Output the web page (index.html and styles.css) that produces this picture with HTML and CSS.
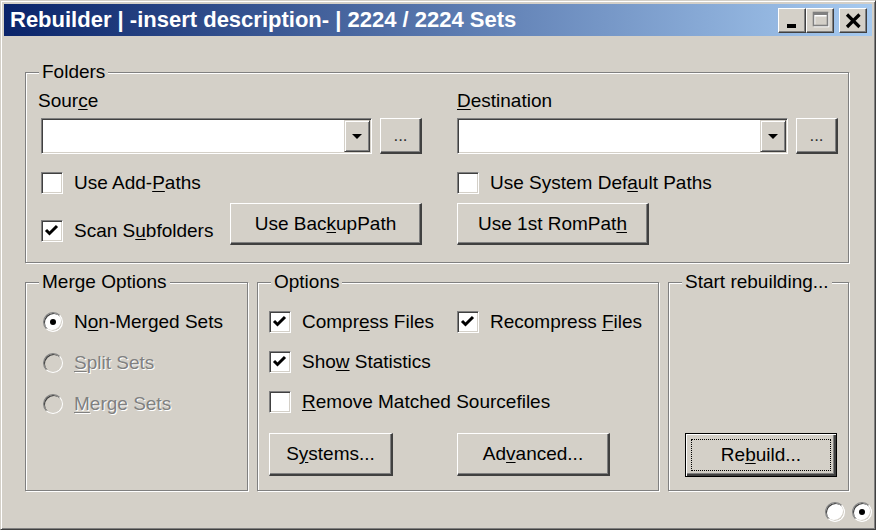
FILE: index.html
```html
<!DOCTYPE html>
<html lang="en">
<head>
    <meta charset="UTF-8">
    <meta name="viewport" content="width=device-width, initial-scale=1.0">
    <title>Rebuilder</title>
    <link rel="stylesheet" href="styles.css">
</head>
<body>
    <div class="window">
        <div class="titlebar">
            <span class="titlebar__text">Rebuilder | -insert description- | 2224 / 2224 Sets</span>
            <div class="titlebar__buttons">
                <button class="cap-btn" title="Minimize">
                    <svg width="26" height="23" viewBox="0 0 26 23"><rect x="8" y="15" width="9" height="4" fill="#000"/></svg>
                </button>
                <button class="cap-btn" title="Maximize">
                    <svg width="26" height="23" viewBox="0 0 26 23">
                        <rect x="7.5" y="4.5" width="14" height="13" fill="none" stroke="#fff" stroke-width="1.6"/>
                        <rect x="7.5" y="5" width="14" height="2.5" fill="#fff"/>
                        <rect x="6.5" y="3.5" width="14" height="13" fill="none" stroke="#808080" stroke-width="1.6"/>
                        <rect x="6.5" y="3.5" width="14" height="2.5" fill="#808080"/>
                    </svg>
                </button>
                <button class="cap-btn cap-btn--close" title="Close">
                    <svg width="26" height="23" viewBox="0 0 26 23"><path d="M7 5.5 L19.5 18 M19.5 5.5 L7 18" stroke="#000" stroke-width="3.2" fill="none"/></svg>
                </button>
            </div>
        </div>

        <div class="client">
            <div class="group group--folders">
                <span class="group__title">Folders</span>
                <div class="folders">
                    <div class="folders__col">
                        <div class="field-label field-label--source">Sour<u>c</u>e</div>
                        <div class="path-row">
                            <div class="combo">
                                <div class="combo__field"></div>
                                <div class="combo__btn"><span class="combo__arrow"></span></div>
                            </div>
                            <button class="btn btn--browse">...</button>
                        </div>
                        <label class="check check--first">
                            <span class="check__box"></span>
                            <span>Use Add-<u>P</u>aths</span>
                        </label>
                        <div class="folders__bottom">
                            <label class="check check--scan">
                                <span class="check__box"><svg width="20" height="20" viewBox="0 0 20 20"><path d="M4 9 L7.5 12.5 L15 5" stroke="#000" stroke-width="3" fill="none"/></svg></span>
                                <span>Scan S<u>u</u>bfolders</span>
                            </label>
                            <button class="btn btn--path btn--push-right">Use Bac<u>k</u>upPath</button>
                        </div>
                    </div>
                    <div class="folders__col">
                        <div class="field-label"><u>D</u>estination</div>
                        <div class="path-row">
                            <div class="combo">
                                <div class="combo__field"></div>
                                <div class="combo__btn"><span class="combo__arrow"></span></div>
                            </div>
                            <button class="btn btn--browse">...</button>
                        </div>
                        <label class="check check--first">
                            <span class="check__box"></span>
                            <span>Use System Def<u>a</u>ult Paths</span>
                        </label>
                        <div class="folders__bottom">
                            <button class="btn btn--path">Use 1st RomPat<u>h</u></button>
                        </div>
                    </div>
                </div>
            </div>

            <div class="groups-row">
                <div class="group group--merge">
                    <span class="group__title">Merge Options</span>
                    <div class="radio-list">
                        <label class="radio">
                            <span class="radio__dot radio__dot--on"></span>
                            <span>N<u>o</u>n-Merged Sets</span>
                        </label>
                        <label class="radio radio--disabled">
                            <span class="radio__dot"></span>
                            <span><u>S</u>plit Sets</span>
                        </label>
                        <label class="radio radio--disabled">
                            <span class="radio__dot"></span>
                            <span><u>M</u>erge Sets</span>
                        </label>
                    </div>
                </div>

                <div class="group group--options">
                    <span class="group__title">Options</span>
                    <div class="options-grid">
                        <label class="check">
                            <span class="check__box"><svg width="20" height="20" viewBox="0 0 20 20"><path d="M4 9 L7.5 12.5 L15 5" stroke="#000" stroke-width="3" fill="none"/></svg></span>
                            <span>Compr<u>e</u>ss Files</span>
                        </label>
                        <label class="check">
                            <span class="check__box"><svg width="20" height="20" viewBox="0 0 20 20"><path d="M4 9 L7.5 12.5 L15 5" stroke="#000" stroke-width="3" fill="none"/></svg></span>
                            <span>Recompress <u>F</u>iles</span>
                        </label>
                        <label class="check options-grid__wide">
                            <span class="check__box"><svg width="20" height="20" viewBox="0 0 20 20"><path d="M4 9 L7.5 12.5 L15 5" stroke="#000" stroke-width="3" fill="none"/></svg></span>
                            <span>Sho<u>w</u> Statistics</span>
                        </label>
                        <label class="check options-grid__wide">
                            <span class="check__box"></span>
                            <span><u>R</u>emove Matched Sourcefiles</span>
                        </label>
                    </div>
                    <div class="options-buttons">
                        <button class="btn btn--systems">S<u>y</u>stems...</button>
                        <button class="btn btn--advanced">Ad<u>v</u>anced...</button>
                    </div>
                </div>

                <div class="group group--start">
                    <span class="group__title">Start rebuilding...</span>
                    <button class="btn btn--default"><span class="btn__focus">Re<u>b</u>uild...</span></button>
                </div>
            </div>

            <div class="status">
                <span class="radio__dot"></span>
                <span class="radio__dot radio__dot--on"></span>
            </div>
        </div>
    </div>
</body>
</html>
```

FILE: styles.css
```css
* {
    box-sizing: border-box;
}
body {
    margin: 0;
    background: #d4d0c8;
    font-family: "Liberation Sans", Arial, sans-serif;
    font-size: 19px;
    color: #000;
}
u {
    text-underline-offset: 2px;
}

/* window frame */
.window {
    width: 876px;
    height: 530px;
    padding: 3px;
    background: #d4d0c8;
    border: 1px solid;
    border-color: #d4d0c8 #404040 #404040 #d4d0c8;
    box-shadow: inset 1px 1px #fff, inset -1px -1px #808080;
}
.titlebar {
    height: 32px;
    display: flex;
    align-items: center;
    padding: 0 5px 0 6px;
    background: linear-gradient(to right, #0a246a, #a6caf0);
}
.titlebar__text {
    flex: 1;
    color: #fff;
    font-weight: bold;
    font-size: 22px;
    line-height: 32px;
    white-space: nowrap;
}
.titlebar__buttons {
    display: flex;
}
.cap-btn {
    width: 28px;
    height: 25px;
    padding: 0;
    background: #d4d0c8;
    border: 1px solid;
    border-color: #fff #404040 #404040 #fff;
    box-shadow: inset -1px -1px #808080;
    display: flex;
    align-items: center;
    justify-content: center;
}
.cap-btn svg {
    display: block;
}
.cap-btn--close {
    margin-left: 5px;
}

/* client area */
.client {
    padding: 36px 23px 0 21px;
}
.group {
    position: relative;
    border: 1px solid #808080;
    box-shadow: inset 1px 1px #fff, 1px 1px #fff;
}
.group__title {
    position: absolute;
    top: -12px;
    left: 13px;
    padding: 0 3px;
    line-height: 22px;
    background: #d4d0c8;
    white-space: nowrap;
}

/* folders */
.group--folders {
    height: 191px;
    padding: 17px 10px 0 15px;
}
.folders {
    display: grid;
    grid-template-columns: 381px 381px;
    column-gap: 35px;
}
.folders__col {
    display: flex;
    flex-direction: column;
}
.field-label {
    height: 22px;
    line-height: 22px;
}
.field-label--source {
    margin-left: -3px;
}
.path-row {
    display: flex;
    gap: 8px;
    margin-top: 6px;
    height: 36px;
}
.combo {
    width: 331px;
    display: flex;
    padding: 1px;
    background: #fff;
    border: 1px solid;
    border-color: #808080 #fff #fff #808080;
    box-shadow: inset 1px 1px #404040, inset -1px -1px #d4d0c8;
}
.combo__field {
    flex: 1;
}
.combo__btn {
    width: 26px;
    display: flex;
    align-items: center;
    justify-content: center;
    background: #d4d0c8;
    border: 1px solid;
    border-color: #d4d0c8 #404040 #404040 #d4d0c8;
    box-shadow: inset 1px 1px #fff, inset -1px -1px #808080;
}
.combo__arrow {
    width: 0;
    height: 0;
    border-left: 5px solid transparent;
    border-right: 5px solid transparent;
    border-top: 5px solid #000;
}
.check--first {
    margin-top: 18px;
}
.folders__bottom {
    display: flex;
    align-items: flex-end;
    margin-top: 9px;
    height: 42px;
}
.check--scan {
    margin-bottom: 3px;
}

/* checkbox and radio */
.check,
.radio {
    display: flex;
    align-items: center;
    gap: 11px;
    height: 22px;
    white-space: nowrap;
}
.check__box {
    width: 22px;
    height: 22px;
    flex: none;
    background: #fff;
    border: 1px solid;
    border-color: #808080 #fff #fff #808080;
    box-shadow: inset 1px 1px #404040, inset -1px -1px #d4d0c8;
}
.check__box svg {
    display: block;
}
.radio {
    gap: 11px;
}
.radio__dot {
    width: 20px;
    height: 20px;
    flex: none;
    border-radius: 50%;
    background: #fff;
    border: 1px solid;
    border-color: #808080 #fff #fff #808080;
    box-shadow: inset 1px 1px #404040, inset -1px -1px #d4d0c8;
    display: flex;
    align-items: center;
    justify-content: center;
}
.radio__dot--on::after {
    content: "";
    width: 6px;
    height: 6px;
    border-radius: 50%;
    background: #000;
}
.radio--disabled {
    color: #808080;
    text-shadow: 1px 1px #fff;
}
.radio--disabled .radio__dot {
    background: #d4d0c8;
}

/* buttons */
.btn {
    font: inherit;
    color: #000;
    padding: 0;
    background: #d4d0c8;
    border-style: solid;
    border-width: 1px 2px 2px 1px;
    border-color: #fff #404040 #404040 #fff;
    box-shadow: inset -1px -1px #808080;
    display: flex;
    align-items: center;
    justify-content: center;
    white-space: nowrap;
}
.btn--browse {
    width: 42px;
    font-size: 17px;
    color: #303030;
}
.btn--path {
    width: 192px;
    height: 42px;
}
.btn--push-right {
    margin-left: auto;
}

/* bottom groups */
.groups-row {
    display: flex;
    gap: 9px;
    margin-top: 19px;
    height: 209px;
}
.group--merge {
    width: 223px;
    padding: 28px 0 0 17px;
}
.radio-list {
    display: flex;
    flex-direction: column;
    gap: 19px;
}
.group--options {
    width: 402px;
    padding: 28px 0 0 11px;
}
.options-grid {
    display: grid;
    grid-template-columns: 188px auto;
    row-gap: 18px;
}
.options-grid__wide {
    grid-column: 1 / 3;
}
.options-buttons {
    display: flex;
    gap: 64px;
    margin-top: 20px;
}
.btn--systems {
    width: 124px;
    height: 43px;
}
.btn--advanced {
    width: 153px;
    height: 43px;
}
.group--start {
    width: 181px;
    display: flex;
    flex-direction: column;
    justify-content: flex-end;
    padding: 0 0 13px 16px;
}
.btn--default {
    width: 152px;
    height: 44px;
    padding: 5px;
    border: 1px solid #000;
    box-shadow: inset 1px 1px #fff, inset -2px -2px #404040, inset -3px -3px #808080;
}
.btn__focus {
    flex: 1;
    align-self: stretch;
    display: flex;
    align-items: center;
    justify-content: center;
    border: 1px dotted #000;
}

/* status radios */
.status {
    display: flex;
    justify-content: flex-end;
    gap: 7px;
    margin: 11px -23px 0 0;
}
```
